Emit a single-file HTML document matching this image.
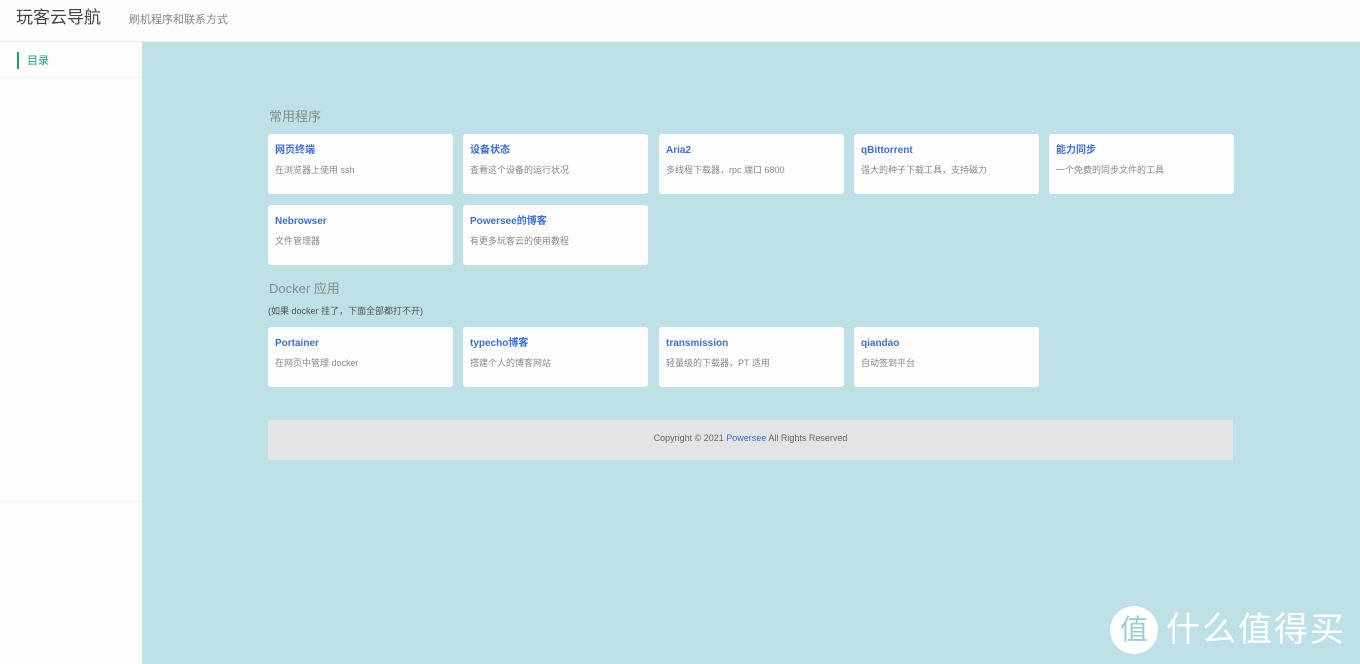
<!DOCTYPE html>
<html><head><meta charset="utf-8"><style>
*{margin:0;padding:0;box-sizing:border-box}
body{width:1360px;height:664px;overflow:hidden;background:#bde1e7;font-family:"Liberation Sans","Noto Sans CJK SC",sans-serif;position:relative}
.hd{position:absolute;left:0;top:0;width:1360px;height:42px;background:#fcfcfd;border-bottom:1px solid #e8eef0}
.logo{position:absolute;left:16px;top:8px;font-size:17px;line-height:20px;color:#444}
.sub{position:absolute;left:129px;top:14px;font-size:11px;line-height:13px;color:#888}
.sb{position:absolute;left:0;top:42px;width:142px;height:622px;background:#fdfdfe}
.sb .it{height:36px;border-bottom:1px solid #eef0f2;position:relative}
.sb .it span{position:absolute;left:27px;top:13px;font-size:11px;line-height:13px;color:#1aa37a}
.sb .it i{position:absolute;left:17px;top:10px;width:2px;height:17px;background:#1aa37a}
.sb .ln{position:absolute;top:459px;left:0;width:142px;border-top:1px solid #eef0f2}
.t{position:absolute;font-size:13px;line-height:15px;color:#888}
.c{position:absolute;width:185px;height:60px;background:#fdfdfe;border-radius:3px}
.c b{position:absolute;left:7px;top:8px;font-size:10px;line-height:12px;color:#3b6fd6}
.c p{position:absolute;left:7px;top:28px;font-size:9px;line-height:11px;color:#888}
.c b{top:11px}.c p{top:31px}
.ft{position:absolute;left:268px;top:420px;width:965px;height:40px;background:#e4e4e5;text-align:center;font-size:9px;color:#666;line-height:36px}
.ft a{color:#3b6fd6}
.wm{position:absolute;left:1110px;top:606px;color:#fff;font-size:34px;line-height:48px;letter-spacing:2px;white-space:nowrap}
.wm i{display:inline-block;width:48px;height:48px;border-radius:50%;background:#fff;color:#9ccdd5;font-style:normal;font-size:28px;text-align:center;line-height:48px;vertical-align:top;margin-right:8px;letter-spacing:0}
</style></head><body>
<div class="hd"><div class="logo">玩客云导航</div><div class="sub">刷机程序和联系方式</div></div>
<div class="sb"><div class="it"><i></i><span>目录</span></div><div class="ln"></div></div>
<div class="t" style="left:269px;top:109px">常用程序</div>
<div class="c" style="left:268px;top:134px"><b>网页终端</b><p>在浏览器上使用 ssh</p></div>
<div class="c" style="left:463px;top:134px"><b>设备状态</b><p>查看这个设备的运行状况</p></div>
<div class="c" style="left:659px;top:134px"><b>Aria2</b><p>多线程下载器，rpc 端口 6800</p></div>
<div class="c" style="left:854px;top:134px"><b>qBittorrent</b><p>强大的种子下载工具，支持磁力</p></div>
<div class="c" style="left:1049px;top:134px"><b>能力同步</b><p>一个免费的同步文件的工具</p></div>
<div class="c" style="left:268px;top:205px"><b>Nebrowser</b><p>文件管理器</p></div>
<div class="c" style="left:463px;top:205px"><b>Powersee的博客</b><p>有更多玩客云的使用教程</p></div>
<div class="t" style="left:269px;top:281px">Docker 应用</div>
<div class="t" style="left:268px;top:306px;font-size:9px;line-height:11px;color:#555">(如果 docker 挂了，下面全部都打不开)</div>
<div class="c" style="left:268px;top:327px"><b>Portainer</b><p>在网页中管理 docker</p></div>
<div class="c" style="left:463px;top:327px"><b>typecho博客</b><p>搭建个人的博客网站</p></div>
<div class="c" style="left:659px;top:327px"><b>transmission</b><p>轻量级的下载器，PT 适用</p></div>
<div class="c" style="left:854px;top:327px"><b>qiandao</b><p>自动签到平台</p></div>
<div class="ft">Copyright © 2021 <a>Powersee</a> All Rights Reserved</div>
<div class="wm"><i>值</i>什么值得买</div>
</body></html>
